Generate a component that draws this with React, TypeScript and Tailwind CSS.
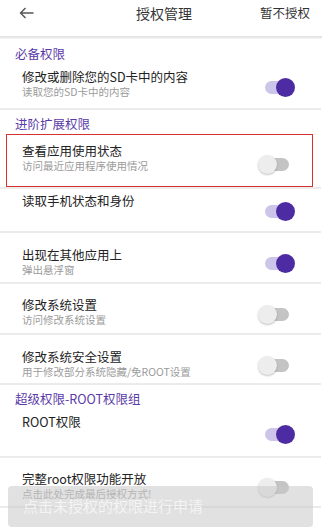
import React from "react";

type Perm = {
  title: string;
  sub?: string;
  on: boolean;
  h: string;
  pt: string;
  boxed?: boolean;
};

const Toggle: React.FC<{ on: boolean }> = ({ on }) => (
  <div className="relative w-[38px] h-[20px] flex items-center">
    <div
      className={`absolute left-[7px] w-[24px] h-[13px] rounded-full ${
        on ? "bg-[#cdc4ea]" : "bg-[#c4c4c4]"
      }`}
    />
    <div
      className={`absolute w-[19px] h-[19px] rounded-full ${
        on
          ? "left-[18px] bg-[#4d2ca3]"
          : "left-0 bg-[#ededed] shadow-[0_1px_2px_rgba(0,0,0,0.25)]"
      }`}
    />
  </div>
);

const Divider = () => <div className="h-[2px] bg-[#ebebeb] mr-[7px]" />;

const Section: React.FC<{ label: string; cls: string }> = ({ label, cls }) => (
  <div className={`flex items-end pl-[15px] text-[12.5px] leading-[16px] text-[#5a3aa8] ${cls}`}>
    {label}
  </div>
);

const Row: React.FC<{ p: Perm }> = ({ p }) => (
  <div
    className={`flex items-start justify-between pl-[22px] pr-[32px] ${p.h} ${p.pt} ${
      p.boxed ? "relative" : ""
    }`}
  >
    <div className="flex flex-col">
      <span className="text-[12.5px] leading-[16px] text-[#222]">{p.title}</span>
      {p.sub && (
        <span className="text-[10.5px] leading-[14px] text-[#9b9b9b]">{p.sub}</span>
      )}
    </div>
    <div className="self-center -mt-[2px]">
      <Toggle on={p.on} />
    </div>
    {p.boxed && (
      <div className="absolute left-[6px] right-[15px] top-0 bottom-0 border-[1.5px] border-[#d8302c] pointer-events-none" />
    )}
  </div>
);

export default function App() {
  return (
    <div
      className="relative w-[328px] h-[531px] overflow-hidden bg-white"
      style={{ fontFamily: '"Noto Sans CJK SC", "Noto Sans", sans-serif' }}
    >
      {/* header */}
      <div className="h-[36px] pb-[10px] flex items-center justify-between pl-[19px] pr-[18px]">
        <svg width="15" height="12" viewBox="0 0 15 12" fill="none" stroke="#555" strokeWidth="1.4">
          <path d="M14.5 6H1.5M6.5 1L1.5 6l5 5" />
        </svg>
        <span className="absolute left-0 right-0 top-[4px] text-center text-[14px] leading-[18px] text-[#333] pointer-events-none">
          授权管理
        </span>
        <span className="text-[12.5px] text-[#333]">暂不授权</span>
      </div>
      <div className="h-[2px] bg-[#e6e6e6] mr-[6px] shadow-[0_1px_1px_rgba(0,0,0,0.05)]" />

      <Section label="必备权限" cls="h-[26px] pb-[2px]" />
      <Row p={{ title: "修改或删除您的SD卡中的内容", sub: "读取您的SD卡中的内容", on: true, h: "h-[44px]", pt: "pt-[5px]" }} />
      <Divider />

      <Section label="进阶扩展权限" cls="h-[24px] pb-[2px]" />
      <Row p={{ title: "查看应用使用状态", sub: "访问最近应用程序使用情况", on: false, h: "h-[53px]", pt: "pt-[9px]", boxed: true }} />
      <Divider />
      <Row p={{ title: "读取手机状态和身份", on: true, h: "h-[42px]", pt: "pt-[4px]" }} />
      <Divider />
      <Row p={{ title: "出现在其他应用上", sub: "弹出悬浮窗", on: true, h: "h-[49px]", pt: "pt-[14px]" }} />
      <Divider />
      <Row p={{ title: "修改系统设置", sub: "访问修改系统设置", on: false, h: "h-[49px]", pt: "pt-[13px]" }} />
      <Divider />
      <Row p={{ title: "修改系统安全设置", sub: "用于修改部分系统隐藏/免ROOT设置", on: false, h: "h-[48px]", pt: "pt-[14px]" }} />
      <Divider />

      <Section label="超级权限-ROOT权限组" cls="h-[24px] pb-[2px]" />
      <Row p={{ title: "ROOT权限", on: true, h: "h-[47px]", pt: "pt-[5px]" }} />
      <Divider />
      <Row p={{ title: "完整root权限功能开放", sub: "点击此处完成最后授权方式!", on: false, h: "h-[48px]", pt: "pt-[13px]" }} />
      <Divider />

      {/* toast */}
      <div className="absolute left-[8px] w-[305px] top-[486px] h-[41px] rounded-[4px] bg-[rgba(200,200,200,0.55)] flex items-center pl-[15px]">
        <span className="text-[15px] text-[#f4f4f4]">点击未授权的权限进行申请</span>
      </div>
    </div>
  );
}
